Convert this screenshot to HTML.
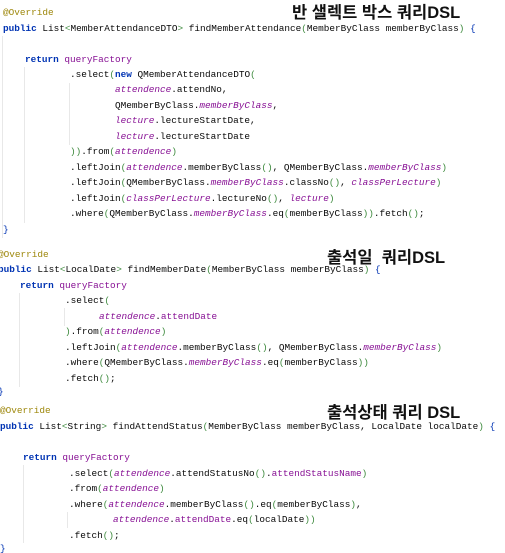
<!DOCTYPE html>
<html><head><meta charset="utf-8"><style>
html,body{margin:0;padding:0;background:#fff;width:505px;height:553px;overflow:hidden;position:relative}
.l{position:absolute;white-space:pre;font-family:"Liberation Mono",monospace;font-size:9.4px;line-height:12px;color:#080808}
.k{color:#0033b3;font-weight:bold}
.a{color:#9e880d}
.f{color:#871094;font-style:italic}
.p{color:#871094}
.g{color:#3f8b3f}
.h{position:absolute;font-family:"Liberation Sans","Noto Sans CJK KR",sans-serif;font-weight:bold;font-size:16.5px;color:#111;white-space:pre;line-height:20px}
.v{position:absolute;width:1px;background:#e8e8e8}
</style></head><body>
<div class="v" style="left:2px;top:36px;height:202px"></div>
<div class="v" style="left:24px;top:67px;height:156px"></div>
<div class="v" style="left:69px;top:83px;height:62px"></div>
<div class="v" style="left:19px;top:293px;height:94px"></div>
<div class="v" style="left:64px;top:308px;height:18px"></div>
<div class="v" style="left:23px;top:465px;height:78px"></div>
<div class="v" style="left:67px;top:512px;height:16px"></div>

<div class="h" style="left:292px;top:3px">반 샐렉트 박스 쿼리DSL</div>
<div class="h" style="left:327px;top:248px">출석일  쿼리DSL</div>
<div class="h" style="left:327px;top:403px">출석상태 쿼리 DSL</div>

<div class="l a" style="left:3px;top:7px">@Override</div>
<div class="l" style="left:3px;top:23px"><span class="k">public</span> List<span class="g">&lt;</span>MemberAttendanceDTO<span class="g">&gt;</span> findMemberAttendance<span class="g">(</span>MemberByClass memberByClass<span class="g">)</span> <span style="color:#0033b3">{</span></div>
<div class="l" style="left:25px;top:54px"><span class="k">return</span> <span class="p">queryFactory</span></div>
<div class="l" style="left:70px;top:69px">.select<span class="g">(</span><span class="k">new</span> QMemberAttendanceDTO<span class="g">(</span></div>
<div class="l" style="left:115px;top:84px"><span class="f">attendence</span>.attendNo,</div>
<div class="l" style="left:115px;top:100px">QMemberByClass.<span class="f">memberByClass</span>,</div>
<div class="l" style="left:115px;top:115px"><span class="f">lecture</span>.lectureStartDate,</div>
<div class="l" style="left:115px;top:131px"><span class="f">lecture</span>.lectureStartDate</div>
<div class="l" style="left:70px;top:146px"><span class="g">))</span>.from<span class="g">(</span><span class="f">attendence</span><span class="g">)</span></div>
<div class="l" style="left:70px;top:162px">.leftJoin<span class="g">(</span><span class="f">attendence</span>.memberByClass<span class="g">()</span>, QMemberByClass.<span class="f">memberByClass</span><span class="g">)</span></div>
<div class="l" style="left:70px;top:177px">.leftJoin<span class="g">(</span>QMemberByClass.<span class="f">memberByClass</span>.classNo<span class="g">()</span>, <span class="f">classPerLecture</span><span class="g">)</span></div>
<div class="l" style="left:70px;top:193px">.leftJoin<span class="g">(</span><span class="f">classPerLecture</span>.lectureNo<span class="g">()</span>, <span class="f">lecture</span><span class="g">)</span></div>
<div class="l" style="left:70px;top:208px">.where<span class="g">(</span>QMemberByClass.<span class="f">memberByClass</span>.eq<span class="g">(</span>memberByClass<span class="g">))</span>.fetch<span class="g">()</span>;</div>
<div class="l" style="left:3px;top:224px;color:#0033b3">}</div>

<div class="l a" style="left:-2px;top:249px">@Override</div>
<div class="l" style="left:-2px;top:264px"><span class="k">public</span> List<span class="g">&lt;</span>LocalDate<span class="g">&gt;</span> findMemberDate<span class="g">(</span>MemberByClass memberByClass<span class="g">)</span> <span style="color:#0033b3">{</span></div>
<div class="l" style="left:20px;top:280px"><span class="k">return</span> <span class="p">queryFactory</span></div>
<div class="l" style="left:65px;top:295px">.select<span class="g">(</span></div>
<div class="l" style="left:99px;top:311px"><span class="f">attendence</span>.<span class="p">attendDate</span></div>
<div class="l" style="left:65px;top:326px"><span class="g">)</span>.from<span class="g">(</span><span class="f">attendence</span><span class="g">)</span></div>
<div class="l" style="left:65px;top:342px">.leftJoin<span class="g">(</span><span class="f">attendence</span>.memberByClass<span class="g">()</span>, QMemberByClass.<span class="f">memberByClass</span><span class="g">)</span></div>
<div class="l" style="left:65px;top:357px">.where<span class="g">(</span>QMemberByClass.<span class="f">memberByClass</span>.eq<span class="g">(</span>memberByClass<span class="g">))</span></div>
<div class="l" style="left:65px;top:373px">.fetch<span class="g">()</span>;</div>
<div class="l" style="left:-2px;top:386px;color:#0033b3">}</div>

<div class="l a" style="left:0px;top:405px">@Override</div>
<div class="l" style="left:0px;top:421px"><span class="k">public</span> List<span class="g">&lt;</span>String<span class="g">&gt;</span> findAttendStatus<span class="g">(</span>MemberByClass memberByClass, LocalDate localDate<span class="g">)</span> <span style="color:#0033b3">{</span></div>
<div class="l" style="left:23px;top:452px"><span class="k">return</span> <span class="p">queryFactory</span></div>
<div class="l" style="left:69px;top:468px">.select<span class="g">(</span><span class="f">attendence</span>.attendStatusNo<span class="g">()</span>.<span class="p">attendStatusName</span><span class="g">)</span></div>
<div class="l" style="left:69px;top:483px">.from<span class="g">(</span><span class="f">attendence</span><span class="g">)</span></div>
<div class="l" style="left:69px;top:499px">.where<span class="g">(</span><span class="f">attendence</span>.memberByClass<span class="g">()</span>.eq<span class="g">(</span>memberByClass<span class="g">)</span>,</div>
<div class="l" style="left:113px;top:514px"><span class="f">attendence</span>.<span class="p">attendDate</span>.eq<span class="g">(</span>localDate<span class="g">))</span></div>
<div class="l" style="left:69px;top:530px">.fetch<span class="g">()</span>;</div>
<div class="l" style="left:0px;top:543px;color:#0033b3">}</div>
</body></html>
